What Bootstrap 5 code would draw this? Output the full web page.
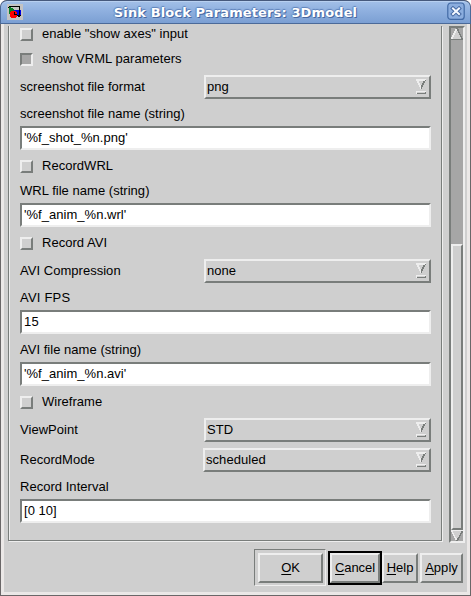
<!DOCTYPE html>
<html lang="en">
<head>
<meta charset="utf-8">
<meta name="viewport" content="width=device-width, initial-scale=1">
<title>Sink Block Parameters: 3Dmodel</title>
<link href="https://cdn.jsdelivr.net/npm/bootstrap@5.3.0/dist/css/bootstrap.min.css" rel="stylesheet">
<style>
:root{--face:#cfcfcf;--hi:#eee;--lo:#797d7b;--trough:#a6a6a6}
body{width:471px;height:596px;overflow:hidden;background:#fff;color:#000;font:13px/14px "Liberation Sans",Arial,sans-serif;letter-spacing:.03px}
.win{width:471px;height:596px;background:#6a6768;border-radius:7px 7px 0 0;overflow:hidden}
.titlebar{height:24px;flex:none;background:linear-gradient(#a3c0e8,#8fb0df 45%,#7b9fd3);border:1px solid #4b6a99;border-top-color:#46597c;border-radius:7px 7px 0 0;box-shadow:inset 0 1px #b8d0f0}
.caption{font:bold 13px/24px "DejaVu Sans",sans-serif;color:#fff;letter-spacing:.12px;padding-left:1px;text-shadow:1px 1px #4868a0,-1px 0 1px #5f82ba,0 -1px 1px #5f82ba;white-space:nowrap}
.appicon{margin:2px 0 0 6px}
.closer{margin:1px 5px 0 0}
.client{margin:0 1px 1px;background:var(--face);border:solid #ebe8e7;border-width:0 3px 3px;height:571px}
.pane{width:434px;height:515px;margin:2px 0 0 4px;padding:2px 10px 0 11px;border:solid var(--lo);border-width:0 1px 1px;box-shadow:inset 1px 0 var(--hi),1px 1px var(--hi)}
.raised{background:var(--face);border:2px solid;border-color:var(--hi) var(--lo) var(--lo) var(--hi)}
.tick{width:13px;height:13px;flex:none}
.tick.on{background:var(--trough);border-color:var(--lo) var(--hi) var(--hi) var(--lo)}
.ck{height:13px;gap:9px}
.ck .lbl{margin-top:-2px}
.field{height:24px;width:411px;background:#fff;border:2px solid;border-color:var(--lo) var(--hi) var(--hi) var(--lo);padding-left:2px;line-height:19px}
.num{letter-spacing:.2px}
.caption-row{height:14px}
.pick{height:24px;width:411px}
.combo{width:227px;height:24px;padding:0 3px 0 1px;letter-spacing:.05px}
.combo.wide{width:228px}
.g5{margin-bottom:5px}.g6{margin-bottom:6px}.g8{margin-bottom:8px}.g9{margin-bottom:9px}.g10{margin-bottom:10px}.g11{margin-bottom:11px}.g12{margin-bottom:12px}
.scroller{width:16px;height:517px;margin:2px 0 0 7px;background:var(--trough);border:2px solid;border-color:var(--lo) var(--hi) var(--hi) var(--lo)}
.thumb{height:286px;margin-top:204px}
.actions{height:37px;margin:6px 0 0 250px}
.okframe{width:72px;height:37px;border:1px solid;border-color:var(--lo) var(--hi) var(--hi) var(--lo);padding:3px 0 0 3px}
.push{height:30px;line-height:26px;text-align:center;white-space:nowrap}
.push u{text-underline-offset:2px}
.b-ok{width:65px;letter-spacing:-.2px}.b-help{width:36px;letter-spacing:0}.b-apply{width:43px;margin-left:2px}
.cancelframe{width:54px;height:34px;border:2px solid #000;margin-left:2px}
.b-cancel{width:50px;letter-spacing:-.1px}
.lbl{white-space:nowrap}
</style>
<script src="https://cdn.jsdelivr.net/npm/bootstrap@5.3.0/dist/js/bootstrap.bundle.min.js"></script>
</head>
<body>
<svg width="0" height="0" class="d-none"><defs>
<symbol id="drop" viewBox="0 0 10 16"><g shape-rendering="crispEdges"><path d="M0 0H10V2H2V4H3V6H4V8H5V10H4V8H3V6H2V4H1V2H0ZM2 2H3V4H4V6H5V8H4V6H3V4H2Z" fill="#eee"/><path d="M9 1H10V2H9V4H8V6H7V8H6V10H5V6H6V4H7V2H9Z" fill="#797d7b"/><path d="M0 12H10V13H1V15H0Z" fill="#eee"/><path d="M1 14H9V13H10V15H1Z" fill="#797d7b"/></g></symbol>
</defs></svg>
<div class="win d-flex flex-column">
  <header class="titlebar d-flex justify-content-between">
    <svg class="appicon" width="16" height="18" viewBox="0 0 16 18" shape-rendering="crispEdges"><path d="M0 1H16V17H0Z" fill="#c3c3c3"/><path d="M2 3V11L8 7Z" fill="#087f25"/><path d="M7 7H14V12H7Z" fill="#0000e4"/><circle cx="6.500" cy="11.500" r="3.700" fill="#f00"/><path d="M1 4.500H2M2 3.500H12.500V13M7.500 9V11.500H10" fill="none" stroke="#000"/><path d="M10 12H14V13H13V14H11V13H10Z"/></svg>
    <div class="caption">Sink Block Parameters: 3Dmodel</div>
    <svg class="closer" width="18" height="18" viewBox="0 0 18 18"><rect x=".8" y="1" width="16.400" height="16.400" rx="3" fill="#8badde" stroke="#426aa5" stroke-width="1.200"/><path d="M6 6.500L12 12M12 6.500L6 12" stroke="#4468a2" stroke-width="4" stroke-linecap="square"/><path d="M6 6.500L12 12M12 6.500L6 12" stroke="#f4f8ff" stroke-width="2" stroke-linecap="square"/></svg>
  </header>
  <main class="client">
    <div class="d-flex">
      <section class="pane d-flex flex-column">
        <div class="ck g12 d-flex align-items-center"><span class="tick raised"></span><span class="lbl">enable "show axes" input</span></div>
        <div class="ck g9 d-flex align-items-center"><span class="tick raised on"></span><span class="lbl">show VRML parameters</span></div>
        <div class="pick g8 d-flex align-items-center justify-content-between"><span class="lbl">screenshot file format</span><div class="combo raised d-flex align-items-center justify-content-between"><span>png</span><svg width="10" height="16"><use href="#drop"/></svg></div></div>
        <div class="caption-row lbl g5">screenshot file name (string)</div>
        <div class="field g10">'%f_shot_%n.png'</div>
        <div class="ck g11 d-flex align-items-center"><span class="tick raised"></span><span class="lbl">RecordWRL</span></div>
        <div class="caption-row lbl g5">WRL file name (string)</div>
        <div class="field g10">'%f_anim_%n.wrl'</div>
        <div class="ck g9 d-flex align-items-center"><span class="tick raised"></span><span class="lbl">Record AVI</span></div>
        <div class="pick g8 d-flex align-items-center justify-content-between"><span class="lbl">AVI Compression</span><div class="combo raised d-flex align-items-center justify-content-between"><span>none</span><svg width="10" height="16"><use href="#drop"/></svg></div></div>
        <div class="caption-row lbl num g5">AVI FPS</div>
        <div class="field num g9">15</div>
        <div class="caption-row lbl g5">AVI file name (string)</div>
        <div class="field g10">'%f_anim_%n.avi'</div>
        <div class="ck g9 d-flex align-items-center"><span class="tick raised"></span><span class="lbl">Wireframe</span></div>
        <div class="pick g6 d-flex align-items-center justify-content-between"><span class="lbl">ViewPoint</span><div class="combo raised d-flex align-items-center justify-content-between"><span>STD</span><svg width="10" height="16"><use href="#drop"/></svg></div></div>
        <div class="pick g8 d-flex align-items-center justify-content-between"><span class="lbl">RecordMode</span><div class="combo wide raised d-flex align-items-center justify-content-between"><span>scheduled</span><svg width="10" height="16"><use href="#drop"/></svg></div></div>
        <div class="caption-row lbl g5">Record Interval</div>
        <div class="field">[0 10]</div>
      </section>
      <div class="scroller d-flex flex-column">
        <svg width="12" height="12" viewBox="0 0 12 12" shape-rendering="crispEdges"><path d="M6 0L12 12H0Z" fill="#cfcfcf"/><path d="M6 0L.500 11" stroke="#eee" stroke-width="2"/><path d="M6 0L11.500 11.500H0" fill="none" stroke="#797d7b" stroke-width="1.500"/></svg>
        <div class="thumb raised"></div>
        <svg width="12" height="11" viewBox="0 0 12 11" shape-rendering="crispEdges"><path d="M0 0H12L6 11Z" fill="#cfcfcf"/><path d="M12 .500H0.500L6 11" fill="none" stroke="#eee" stroke-width="1.500"/><path d="M11.500 1L6 11" stroke="#797d7b" stroke-width="1.500"/></svg>
      </div>
    </div>
    <footer class="actions d-flex align-items-center">
      <div class="okframe"><div class="push raised b-ok"><u>O</u>K</div></div>
      <div class="cancelframe"><div class="push raised b-cancel"><u>C</u>ancel</div></div>
      <div class="push raised b-help"><u>H</u>elp</div>
      <div class="push raised b-apply"><u>A</u>pply</div>
    </footer>
  </main>
</div>
</body>
</html>
